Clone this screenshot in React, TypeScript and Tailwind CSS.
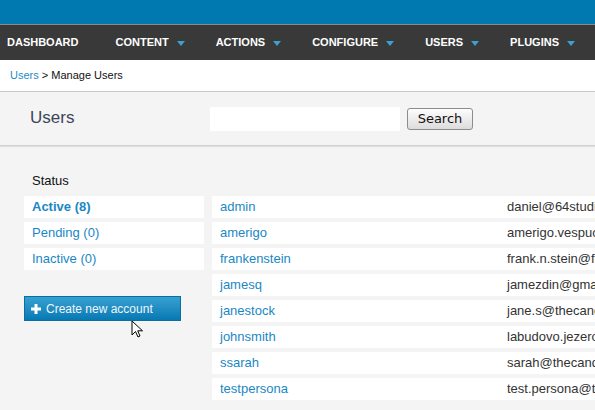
import React from "react";

const navItems: { label: string; arrow: boolean }[] = [
  { label: "DASHBOARD", arrow: false },
  { label: "CONTENT", arrow: true },
  { label: "ACTIONS", arrow: true },
  { label: "CONFIGURE", arrow: true },
  { label: "USERS", arrow: true },
  { label: "PLUGINS", arrow: true },
];

const users: [string, string][] = [
  ["admin", "daniel@64studio.com"],
  ["amerigo", "amerigo.vespucci@example.com"],
  ["frankenstein", "frank.n.stein@frankenstein.com"],
  ["jamesq", "jamezdin@gmail.com"],
  ["janestock", "jane.s@thecandidates.com"],
  ["johnsmith", "labudovo.jezero@example.com"],
  ["ssarah", "sarah@thecandidates.com"],
  ["testpersona", "test.persona@thecandidates.com"],
];

function Arrow() {
  return (
    <svg width="8" height="5" viewBox="0 0 8 5" className="ml-[8px] mt-[1px]">
      <polygon points="0,0 8,0 4,5" fill="#3d9fd3" />
    </svg>
  );
}

export default function App() {
  return (
    <div
      className="relative w-[595px] h-[410px] overflow-hidden bg-[#f4f4f4]"
      style={{ fontFamily: '"Liberation Sans", Arial, sans-serif' }}
    >
      {/* top blue bar */}
      <div className="h-[24px] bg-[#0079b1]" />
      <div className="h-[1px] bg-[#8a8a8a]" />
      {/* nav */}
      <div className="h-[35px] bg-[#393939] flex items-center pl-[7px] gap-[31px] whitespace-nowrap">
        {navItems.map((n, i) => (
          <div
            key={n.label}
            className={`flex items-center shrink-0 text-[11px] font-bold text-white ${i === 0 ? "mr-[6px]" : ""}`}
          >
            <span>{n.label}</span>
            {n.arrow && <Arrow />}
          </div>
        ))}
      </div>
      {/* breadcrumb */}
      <div className="h-[32px] bg-white flex items-center pl-[10px] text-[11px] text-[#111] border-b border-[#c8c8c8]">
        <span className="text-[#238cc8]">Users</span>
        <span>&nbsp;&gt; Manage Users</span>
      </div>
      {/* header */}
      <div className="h-[54px] bg-[#f4f4f4] flex items-center pl-[30px] border-b border-[#cfcfcf] shadow-[0_1px_1px_rgba(0,0,0,0.08)]">
        <div className="w-[180px] shrink-0 text-[17px] text-[#3a4657] mt-[-2px]">Users</div>
        <div className="w-[190px] shrink-0 h-[24px] bg-white" />
        <button
          className="ml-[7px] shrink-0 w-[66px] h-[22px] rounded-[3px] border border-[#8c8c8c] bg-gradient-to-b from-[#fdfdfd] to-[#dcdcdc] text-[13px] text-[#111] leading-none"
          style={{ fontFamily: '"DejaVu Sans", sans-serif' }}
        >
          Search
        </button>
      </div>
      {/* content */}
      <div className="pl-[24px] pt-[26px]">
        <div className="pl-[8px] text-[13px] text-[#111] h-[17px] leading-[17px]">Status</div>
        <div className="flex gap-[8px] mt-[7px]">
          <div className="w-[180px] shrink-0 flex flex-col gap-[4px]">
            <div className="h-[22px] bg-white pl-[8px] flex items-center text-[13px] font-bold text-[#1a87c4]">
              Active (8)
            </div>
            <div className="h-[22px] bg-white pl-[8px] flex items-center text-[13px] text-[#1a87c4]">
              Pending (0)
            </div>
            <div className="h-[22px] bg-white pl-[8px] flex items-center text-[13px] text-[#1a87c4]">
              Inactive (0)
            </div>
            <button className="mt-[22px] w-[157px] h-[25px] border border-[#0a6e9e] bg-gradient-to-b from-[#35a1d2] to-[#0479b3] flex items-center pl-[6px] text-[12px] text-[#eef7fc]">
              <svg width="10" height="10" viewBox="0 0 10 10" className="mr-[5px]">
                <rect x="3.5" y="0" width="3" height="10" fill="white" />
                <rect x="0" y="3.5" width="10" height="3" fill="white" />
              </svg>
              Create new account
            </button>
          </div>
          <div className="flex-1 min-w-0 flex flex-col gap-[4px] whitespace-nowrap">
            {users.map(([u, e]) => (
              <div key={u} className="h-[22px] bg-white flex items-center text-[13px] overflow-hidden">
                <div className="w-[295px] shrink-0 pl-[8px] text-[#1a87c4]">{u}</div>
                <div className="text-[#333]">{e}</div>
              </div>
            ))}
          </div>
        </div>
      </div>
      {/* mouse cursor */}
      <svg
        className="absolute left-[131px] top-[320px]"
        width="14"
        height="20"
        viewBox="0 0 14 20"
      >
        <path
          d="M1 1 L1 15 L4.5 11.5 L7 17 L9 16 L6.7 10.8 L11.5 10.8 Z"
          fill="white"
          stroke="black"
          strokeWidth="1"
          strokeLinejoin="round"
        />
      </svg>
    </div>
  );
}
